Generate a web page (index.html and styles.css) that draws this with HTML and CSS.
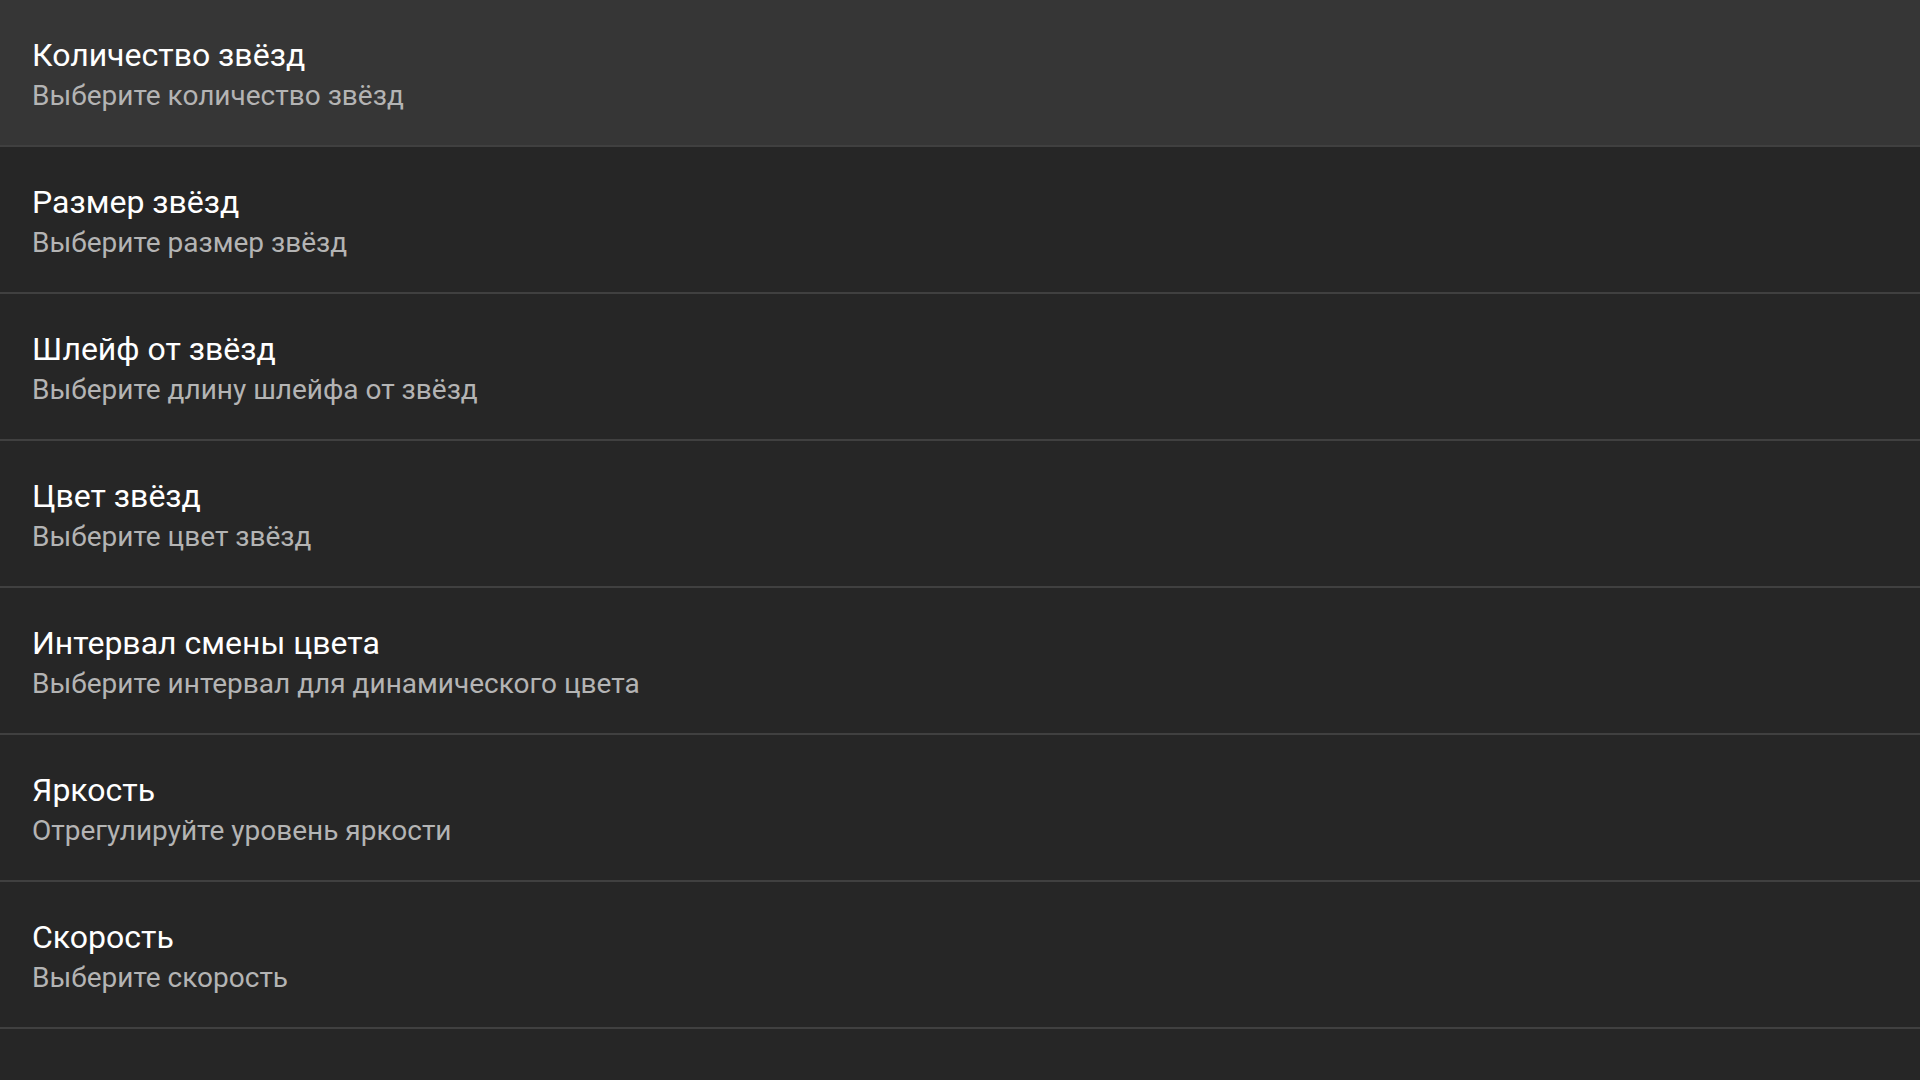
FILE: index.html
```html
<!DOCTYPE html>
<html lang="ru">
<head>
<meta charset="utf-8">
<title>Настройки</title>
<link rel="stylesheet" href="styles.css">
</head>
<body>
<div class="list">
  <div class="item item-focused">
    <div class="title">Количество звёзд</div>
    <div class="summary">Выберите количество звёзд</div>
  </div>
  <div class="item">
    <div class="title">Размер звёзд</div>
    <div class="summary">Выберите размер звёзд</div>
  </div>
  <div class="item">
    <div class="title">Шлейф от звёзд</div>
    <div class="summary">Выберите длину шлейфа от звёзд</div>
  </div>
  <div class="item">
    <div class="title">Цвет звёзд</div>
    <div class="summary">Выберите цвет звёзд</div>
  </div>
  <div class="item">
    <div class="title">Интервал смены цвета</div>
    <div class="summary">Выберите интервал для динамического цвета</div>
  </div>
  <div class="item">
    <div class="title">Яркость</div>
    <div class="summary">Отрегулируйте уровень яркости</div>
  </div>
  <div class="item">
    <div class="title">Скорость</div>
    <div class="summary">Выберите скорость</div>
  </div>
</div>
</body>
</html>
```
FILE: styles.css
```css
html, body {
  margin: 0;
  padding: 0;
  background: #262626;
  height: 100%;
  overflow: hidden;
}
body {
  font-family: Roboto, "Noto Sans", sans-serif;
}
.list {
  display: flex;
  flex-direction: column;
}
.item {
  box-sizing: border-box;
  height: 147px;
  padding: 37px 32px 0;
  border-bottom: 2px solid #404040;
  background: #262626;
}
.item-focused {
  background: #363636;
}
.title {
  font-size: 32px;
  font-weight: 400;
  line-height: 36px;
  color: #ffffff;
}
.summary {
  margin-top: 5px;
  font-size: 28px;
  font-weight: 400;
  line-height: 36px;
  color: #b4b4b4;
}
```
